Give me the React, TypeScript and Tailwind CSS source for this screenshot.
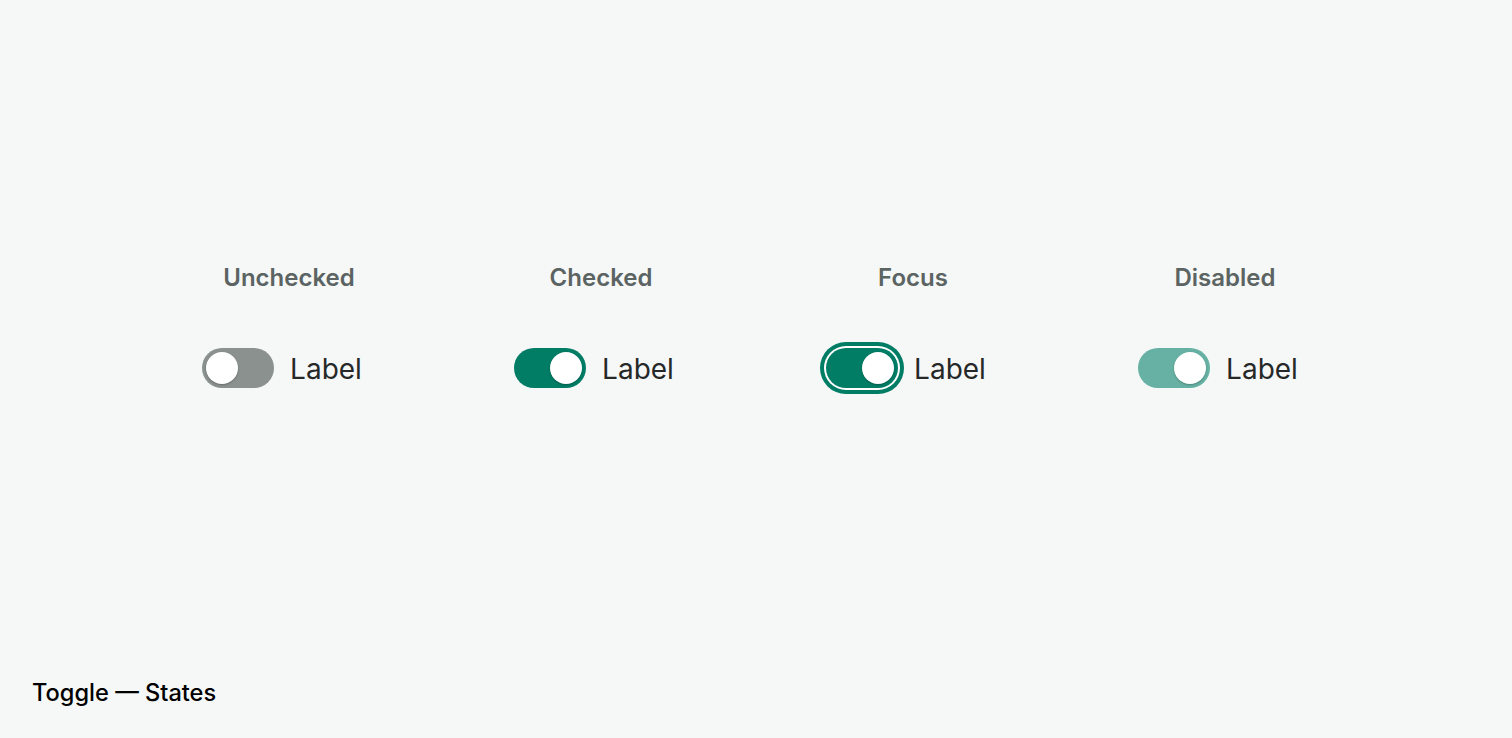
import React from "react"

type State = "unchecked" | "checked" | "focus" | "disabled"

const columns: { title: string; state: State }[] = [
    { title: "Unchecked", state: "unchecked" },
    { title: "Checked", state: "checked" },
    { title: "Focus", state: "focus" },
    { title: "Disabled", state: "disabled" },
]

function Toggle({ state }: { state: State }) {
    const on = state !== "unchecked"
    const track =
        state === "unchecked"
            ? "bg-[#8a918f] justify-start"
            : state === "disabled"
              ? "bg-[#66b1a3] justify-end"
              : "bg-[#017c65] justify-end"
    const ring = state === "focus" ? "ring-4 ring-[#017c65] ring-offset-2 ring-offset-white" : ""
    return (
        <button
            type="button"
            role="switch"
            aria-checked={on}
            disabled={state === "disabled"}
            className={`flex h-[40px] w-[72px] shrink-0 items-center rounded-full p-[4px] ${track} ${ring}`}
        >
            <span className="block h-[32px] w-[32px] rounded-full bg-white shadow-[0_1px_2px_rgba(0,0,0,0.25)]" />
        </button>
    )
}

export default function App() {
    return (
        <div
            className="relative flex h-[738px] w-full flex-col bg-[#f6f8f7]"
            style={{ fontFamily: "Inter, 'Noto Sans', sans-serif" }}
        >
            <div className="flex flex-1 items-center justify-center">
                <div className="grid grid-cols-4 w-[1248px] -mt-[27px] ml-[2px]">
                    {columns.map((c) => (
                        <div key={c.title} className="flex flex-col items-center">
                            <h3 className="text-[24px] leading-[30px] font-semibold text-[#5b6463]">{c.title}</h3>
                            <div className="mt-[55px] flex items-center gap-[16px] pr-[14px]">
                                <Toggle state={c.state} />
                                <span className="text-[28px] leading-[40px] text-[#262828] mt-[1px]">Label</span>
                            </div>
                        </div>
                    ))}
                </div>
            </div>
            <div className="px-[32px] pb-[30px] text-[23.6px] leading-[30px] font-medium text-black">
                Toggle — States
            </div>
        </div>
    )
}
